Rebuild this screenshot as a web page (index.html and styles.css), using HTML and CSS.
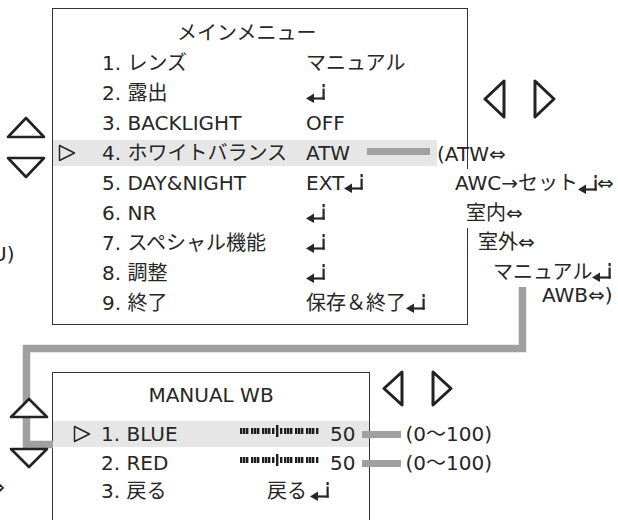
FILE: index.html
```html
<!DOCTYPE html>
<html lang="ja">
<head>
    <meta charset="UTF-8">
    <meta name="viewport" content="width=device-width, initial-scale=1.0">
    <title>メインメニュー</title>
    <link rel="stylesheet" href="styles.css">
</head>
<body>
<svg class="defs" width="0" height="0">
    <symbol id="enter" viewBox="0 0 19 19">
        <rect x="16.5" y="0" width="2.2" height="3.2"/>
        <rect x="16.5" y="4.6" width="2.2" height="11"/>
        <rect x="6" y="13.4" width="12.7" height="2.2"/>
        <polygon points="0,14.5 8,9.5 8,19"/>
    </symbol>
    <symbol id="pointer" viewBox="0 0 18 18">
        <polygon points="1.5,1.5 16.5,9 1.5,16.5" fill="none" stroke="#262626" stroke-width="1.5" stroke-linejoin="round"/>
    </symbol>
    <symbol id="slider" viewBox="0 0 80 12">
        <rect x="0" y="3" width="2.4" height="6"/><rect x="3" y="3" width="2.4" height="6"/><rect x="6" y="3" width="2.4" height="6"/>
        <rect x="11" y="3" width="2.4" height="6"/><rect x="14" y="3" width="2.4" height="6"/><rect x="17" y="3" width="2.4" height="6"/>
        <rect x="22" y="3" width="2.4" height="6"/><rect x="25" y="3" width="2.4" height="6"/><rect x="28" y="3" width="2.4" height="6"/>
        <rect x="32" y="3" width="2.4" height="6"/><rect x="36" y="0" width="2.4" height="12"/><rect x="40" y="3" width="2.4" height="6"/>
        <rect x="44" y="3" width="2.4" height="6"/><rect x="47" y="3" width="2.4" height="6"/><rect x="50" y="3" width="2.4" height="6"/>
        <rect x="55" y="3" width="2.4" height="6"/><rect x="58" y="3" width="2.4" height="6"/><rect x="61" y="3" width="2.4" height="6"/>
        <rect x="66" y="3" width="2.4" height="6"/><rect x="69" y="3" width="2.4" height="6"/><rect x="72" y="3" width="2.4" height="6"/>
        <rect x="76" y="3" width="2.4" height="6"/>
    </symbol>
</svg>

<div class="sheet">
    <!-- Verbindung ATW-Menü -> MANUAL WB -->
    <svg class="route" width="618" height="520">
        <path d="M522.5 287 V348.5 H26.5 V444.5 H53"/>
    </svg>

    <section class="menu menu-main">
        <h1 class="menu-title title-main">メインメニュー</h1>
        <ul class="rows">
            <li class="row"><span class="mark"></span><span class="label">1. レンズ</span><span class="value">マニュアル</span></li>
            <li class="row"><span class="mark"></span><span class="label">2. 露出</span><span class="value"><svg class="enter"><use href="#enter"/></svg></span></li>
            <li class="row"><span class="mark"></span><span class="label">3. BACKLIGHT</span><span class="value">OFF</span></li>
            <li class="row active"><span class="mark"><svg class="pointer"><use href="#pointer"/></svg></span><span class="label">4. ホワイトバランス</span><span class="value">ATW<i class="bar bar-atw"></i></span></li>
            <li class="row"><span class="mark"></span><span class="label">5. DAY&amp;NIGHT</span><span class="value">EXT<svg class="enter"><use href="#enter"/></svg></span></li>
            <li class="row"><span class="mark"></span><span class="label">6. NR</span><span class="value"><svg class="enter"><use href="#enter"/></svg></span></li>
            <li class="row"><span class="mark"></span><span class="label">7. スペシャル機能</span><span class="value"><svg class="enter"><use href="#enter"/></svg></span></li>
            <li class="row"><span class="mark"></span><span class="label">8. 調整</span><span class="value"><svg class="enter"><use href="#enter"/></svg></span></li>
            <li class="row"><span class="mark"></span><span class="label">9. 終了</span><span class="value">保存＆終了 <svg class="enter"><use href="#enter"/></svg></span></li>
        </ul>
    </section>

    <section class="menu menu-wb">
        <h2 class="menu-title title-wb">MANUAL WB</h2>
        <ul class="rows">
            <li class="row active"><span class="mark"><svg class="pointer"><use href="#pointer"/></svg></span><span class="label">1. BLUE</span><span class="value"><svg class="slider"><use href="#slider"/></svg><span class="num">50</span><i class="bar bar-range"></i><span class="range">(0〜100)</span></span></li>
            <li class="row"><span class="mark"></span><span class="label">2. RED</span><span class="value"><svg class="slider"><use href="#slider"/></svg><span class="num">50</span><i class="bar bar-range"></i><span class="range">(0〜100)</span></span></li>
            <li class="row"><span class="mark"></span><span class="label">3. 戻る</span><span class="value"><span class="back">戻る</span><svg class="enter"><use href="#enter"/></svg></span></li>
        </ul>
    </section>

    <ul class="options">
        <li class="opt-1">(ATW⇔</li>
        <li class="opt-2"><span class="cover">AWC→セット<svg class="enter"><use href="#enter"/></svg>⇔</span></li>
        <li class="opt-3"><span class="cover">室内⇔</span></li>
        <li class="opt-4">室外⇔</li>
        <li class="opt-5">マニュアル<svg class="enter"><use href="#enter"/></svg></li>
        <li class="opt-6">AWB⇔)</li>
    </ul>

    <!-- Bedientasten -->
    <svg class="key key-up-1" width="40" height="23"><polygon points="2,21 20,2 38,21"/></svg>
    <svg class="key key-down-1" width="40" height="23"><polygon points="2,2 38,2 20,21"/></svg>
    <svg class="key key-up-2" width="40" height="22"><polygon points="2,20 20,2 38,20"/></svg>
    <svg class="key key-down-2" width="40" height="22"><polygon points="2,2 38,2 20,20"/></svg>
    <svg class="key key-left-1" width="23" height="40"><polygon points="21,2 2,20 21,38"/></svg>
    <svg class="key key-right-1" width="23" height="40"><polygon points="2,2 21,20 2,38"/></svg>
    <svg class="key key-left-2" width="22" height="38"><polygon points="20,2 2,18.5 20,35"/></svg>
    <svg class="key key-right-2" width="22" height="38"><polygon points="2,2 20,18.5 2,35"/></svg>

    <span class="cut cut-1">U)</span>
    <span class="cut cut-2">⇔</span>
</div>
</body>
</html>
```

FILE: styles.css
```css
body {
    margin: 0;
    background: #fff;
    color: #262626;
    font-family: "DejaVu Sans", "Noto Sans CJK JP", sans-serif;
    font-size: 20px;
}

.defs {
    position: absolute;
}

.sheet {
    position: relative;
    width: 618px;
    height: 520px;
    overflow: hidden;
}

.route {
    position: absolute;
    left: 0;
    top: 0;
}

.route path {
    fill: none;
    stroke: #a0a0a0;
    stroke-width: 7.5;
}

.menu {
    box-sizing: border-box;
    border: 1px solid #333;
    margin-left: 52px;
}

.menu-title {
    margin: 0;
    font-size: 20px;
    font-weight: normal;
}

.rows {
    list-style: none;
    margin: 0;
    padding: 0;
}

.row {
    display: flex;
    align-items: center;
    white-space: nowrap;
}

.mark,
.label {
    flex: none;
}

.value {
    display: flex;
    align-items: center;
}

.enter {
    width: 19px;
    height: 19px;
    fill: #262626;
    flex: none;
}

.pointer {
    width: 18px;
    height: 18px;
    display: block;
}

.bar {
    display: inline-block;
    height: 7px;
    background: #a0a0a0;
    flex: none;
}

/* Hauptmenü */
.menu-main {
    margin-top: 8px;
    width: 416px;
    height: 317px;
    padding: 9px 0 6px;
}

.title-main {
    line-height: 30px;
    padding-left: 124px;
}

.menu-main .row {
    height: 30px;
    line-height: 30px;
}

.menu-main .row.active {
    height: 26px;
    margin: 2px 30px 2px 0;
    background: #e6e6e6;
}

.menu-main .mark {
    width: 44px;
    padding-left: 5px;
}

.menu-main .label {
    width: 204px;
}

.bar-atw {
    width: 63px;
    margin: 0 0 4px 17px;
}

/* MANUAL WB */
.menu-wb {
    margin-top: 47px;
    width: 318px;
    height: 170px;
    padding-top: 8px;
}

.title-wb {
    line-height: 28px;
    text-align: center;
    margin-bottom: 12px;
}

.menu-wb .row {
    height: 28px;
    line-height: 28px;
}

.menu-wb .row.active {
    height: 26px;
    margin-bottom: 2px;
    background: #e6e6e6;
}

.menu-wb .mark {
    width: 28px;
    padding-left: 20px;
}

.menu-wb .label {
    width: 139px;
}

.slider {
    width: 80px;
    height: 12px;
    fill: #1e1e1e;
    margin-bottom: 6px;
}

.num {
    margin-left: 10px;
}

.bar-range {
    width: 39px;
    margin-left: 7px;
}

.range {
    margin-left: 4px;
}

.back {
    margin-left: 27px;
    margin-right: 3px;
}

/* Auswahlwerte ATW */
.options {
    position: absolute;
    left: 437px;
    top: 140px;
    margin: 0;
    padding: 0;
    list-style: none;
    white-space: nowrap;
}

.options li {
    display: flex;
    align-items: center;
    height: 29.4px;
    line-height: 29.4px;
}

.cover {
    display: flex;
    align-items: center;
    background: #fff;
}

.opt-2 { margin-left: 18px; }
.opt-3 { margin-left: 29px; }
.opt-4 { margin-left: 41px; }
.opt-5 { margin-left: 56px; }
.opt-6 { margin-left: 105px; margin-top: -6px; }

/* Tasten */
.key {
    position: absolute;
}

.key polygon {
    fill: #fff;
    stroke: #222;
    stroke-width: 2.6;
    stroke-linejoin: round;
}

.key-up-1 { left: 6px; top: 116px; }
.key-down-1 { left: 6px; top: 156px; }
.key-up-2 { left: 9px; top: 397px; }
.key-down-2 { left: 9px; top: 447px; }
.key-left-1 { left: 483px; top: 79px; }
.key-right-1 { left: 533px; top: 79px; }
.key-left-2 { left: 382px; top: 370px; }
.key-right-2 { left: 431px; top: 370px; }

.key-left-1 polygon,
.key-right-1 polygon,
.key-left-2 polygon,
.key-right-2 polygon {
    stroke-width: 3;
}

.cut {
    position: absolute;
    line-height: 30px;
}

.cut-1 { left: -8px; top: 239px; }
.cut-2 { left: -12px; top: 472px; }
```
